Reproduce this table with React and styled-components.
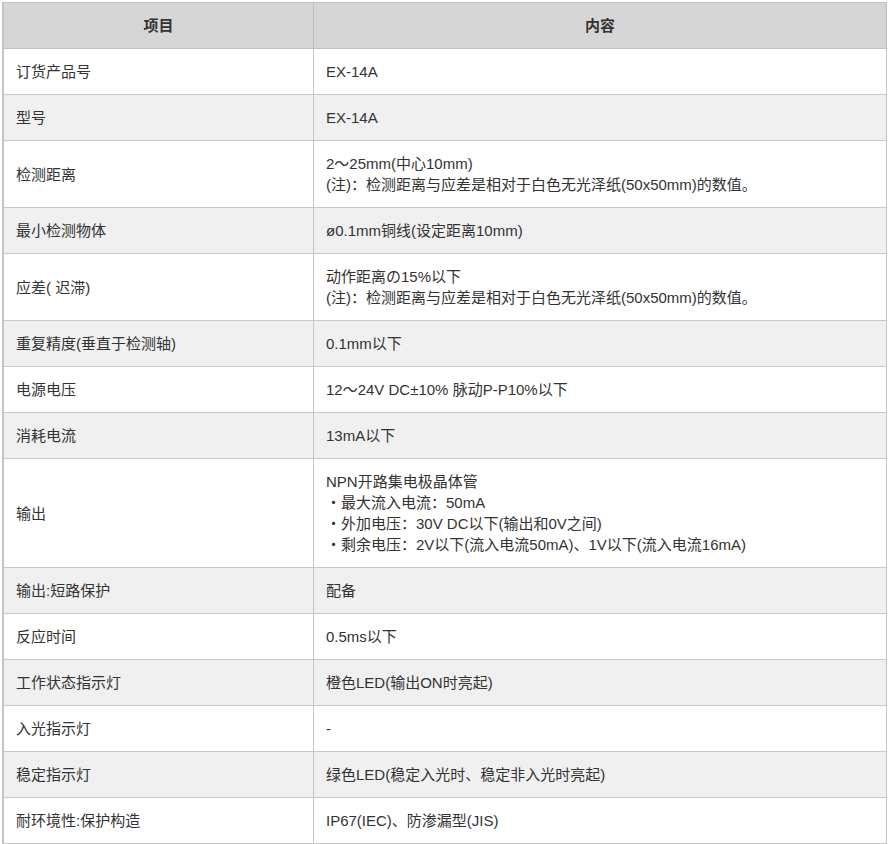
import React from "react";
import styled, { createGlobalStyle } from "styled-components";

const GlobalStyle = createGlobalStyle`
  html, body {
    margin: 0;
    padding: 0;
    background: #ffffff;
  }
  body {
    font-family: "Liberation Sans", "Noto Sans CJK SC", sans-serif;
    color: #333333;
  }
`;

const Page = styled.div`
  padding: 2px 3px 0 2px;
`;

const SpecTable = styled.table`
  width: 885px;
  border-collapse: collapse;
  table-layout: fixed;
  font-size: 15px;
  line-height: 21px;
  border-left: 2px solid #c4c4c4;
`;

const HeadCell = styled.th`
  background: #d6d6d6;
  border: 1px solid #c0c0c0;
  padding: 12px;
  font-weight: bold;
  text-align: center;
  color: #333333;
  width: ${({ $w }) => $w};
`;

const Row = styled.tr`
  background: ${({ $alt }) => ($alt ? "#f0f0f0" : "#ffffff")};
`;

const Cell = styled.td`
  border: 1px solid #c8c8c8;
  padding: 12px;
  vertical-align: middle;
  color: #333333;
`;

const rows = [
  ["订货产品号", ["EX-14A"]],
  ["型号", ["EX-14A"]],
  [
    "检测距离",
    ["2～25mm(中心10mm)", "(注)：检测距离与应差是相对于白色无光泽纸(50x50mm)的数值。"],
  ],
  ["最小检测物体", ["ø0.1mm铜线(设定距离10mm)"]],
  [
    "应差( 迟滞)",
    ["动作距离の15%以下", "(注)：检测距离与应差是相对于白色无光泽纸(50x50mm)的数值。"],
  ],
  ["重复精度(垂直于检测轴)", ["0.1mm以下"]],
  ["电源电压", ["12～24V DC±10% 脉动P-P10%以下"]],
  ["消耗电流", ["13mA以下"]],
  [
    "输出",
    [
      "NPN开路集电极晶体管",
      "・最大流入电流：50mA",
      "・外加电压：30V DC以下(输出和0V之间)",
      "・剩余电压：2V以下(流入电流50mA)、1V以下(流入电流16mA)",
    ],
  ],
  ["输出:短路保护", ["配备"]],
  ["反应时间", ["0.5ms以下"]],
  ["工作状态指示灯", ["橙色LED(输出ON时亮起)"]],
  ["入光指示灯", ["-"]],
  ["稳定指示灯", ["绿色LED(稳定入光时、稳定非入光时亮起)"]],
  ["耐环境性:保护构造", ["IP67(IEC)、防渗漏型(JIS)"]],
  ["", [""]],
];

export default function App() {
  return (
    <Page>
      <GlobalStyle />
      <SpecTable>
        <thead>
          <tr>
            <HeadCell $w="285px">项目</HeadCell>
            <HeadCell>内容</HeadCell>
          </tr>
        </thead>
        <tbody>
          {rows.map(([label, lines], i) => (
            <Row key={i} $alt={i % 2 === 1}>
              <Cell>{label || "\u00a0"}</Cell>
              <Cell>
                {lines.map((line, j) => (
                  <React.Fragment key={j}>
                    {j > 0 && <br />}
                    {line || "\u00a0"}
                  </React.Fragment>
                ))}
              </Cell>
            </Row>
          ))}
        </tbody>
      </SpecTable>
    </Page>
  );
}
